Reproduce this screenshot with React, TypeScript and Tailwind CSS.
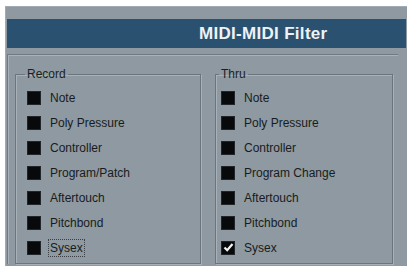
import React from "react"

const recordItems = ["Note", "Poly Pressure", "Controller", "Program/Patch", "Aftertouch", "Pitchbond", "Sysex"]
const thruItems = ["Note", "Poly Pressure", "Controller", "Program Change", "Aftertouch", "Pitchbond", "Sysex"]

function Box({ checked }: { checked?: boolean }) {
  return (
    <span className="w-[14px] h-[14px] bg-[#08090a] border border-[#22262a] flex items-center justify-center shrink-0">
      {checked && (
        <svg width="11" height="11" viewBox="0 0 11 11">
          <path d="M1.5 5.5 L4.2 8.2 L9.5 2" stroke="#f2f4f5" strokeWidth="2.2" fill="none" />
        </svg>
      )}
    </span>
  )
}

function Group({
  label,
  items,
  checkedIndex,
  focusIndex,
  width,
  padClass,
}: {
  label: string
  items: string[]
  checkedIndex?: number
  focusIndex?: number
  width: string
  padClass: string
}) {
  return (
    <fieldset
      className={`${width} h-[197px] border border-[#6b757d] shadow-[inset_1px_1px_0_#a8b1b7,1px_1px_0_#a8b1b7] ${padClass} pt-[4px]`}
    >
      <legend className="-ml-[2px] px-[2px] text-[12px] leading-[14px] text-[#1b1f23]">{label}</legend>
      {items.map((it, i) => (
        <div key={i} className="h-[25px] flex items-center gap-[9px]">
          <Box checked={i === checkedIndex} />
          <span
            className={`text-[12px] leading-[14px] text-[#181c20] ${
              i === focusIndex ? "outline outline-1 outline-dotted outline-[#3a4046] outline-offset-[1px]" : ""
            }`}
          >
            {it}
          </span>
        </div>
      ))}
    </fieldset>
  )
}

export default function App() {
  return (
    <div
      className="w-[412px] h-[268px] bg-white pt-[6px] px-[5px]"
      style={{ fontFamily: '"Liberation Sans", Arial, sans-serif' }}
    >
      <div className="h-[260px] bg-[#8e99a1] border-t border-l border-[#a2abb2] flex flex-col">
        <div className="mt-[12px] ml-[1px] mr-[1px] h-[29px] bg-[#2b5170] flex items-center pl-[192px]">
          <span className="text-[17px] font-bold text-[#eef2f5] tracking-[0.3px]">MIDI-MIDI Filter</span>
        </div>
        <div className="mt-[6px] ml-[1px] w-[391px] h-[210px] border-t border-l border-[#6f7a82] shadow-[inset_1px_1px_0_#a9b2b8] pl-[7px] pt-[12px] flex gap-[14px] items-start">
          <Group label="Record" items={recordItems} focusIndex={6} width="w-[186px]" padClass="pl-[11px]" />
          <Group label="Thru" items={thruItems} checkedIndex={6} width="w-[178px]" padClass="pl-[5px]" />
        </div>
      </div>
    </div>
  )
}
